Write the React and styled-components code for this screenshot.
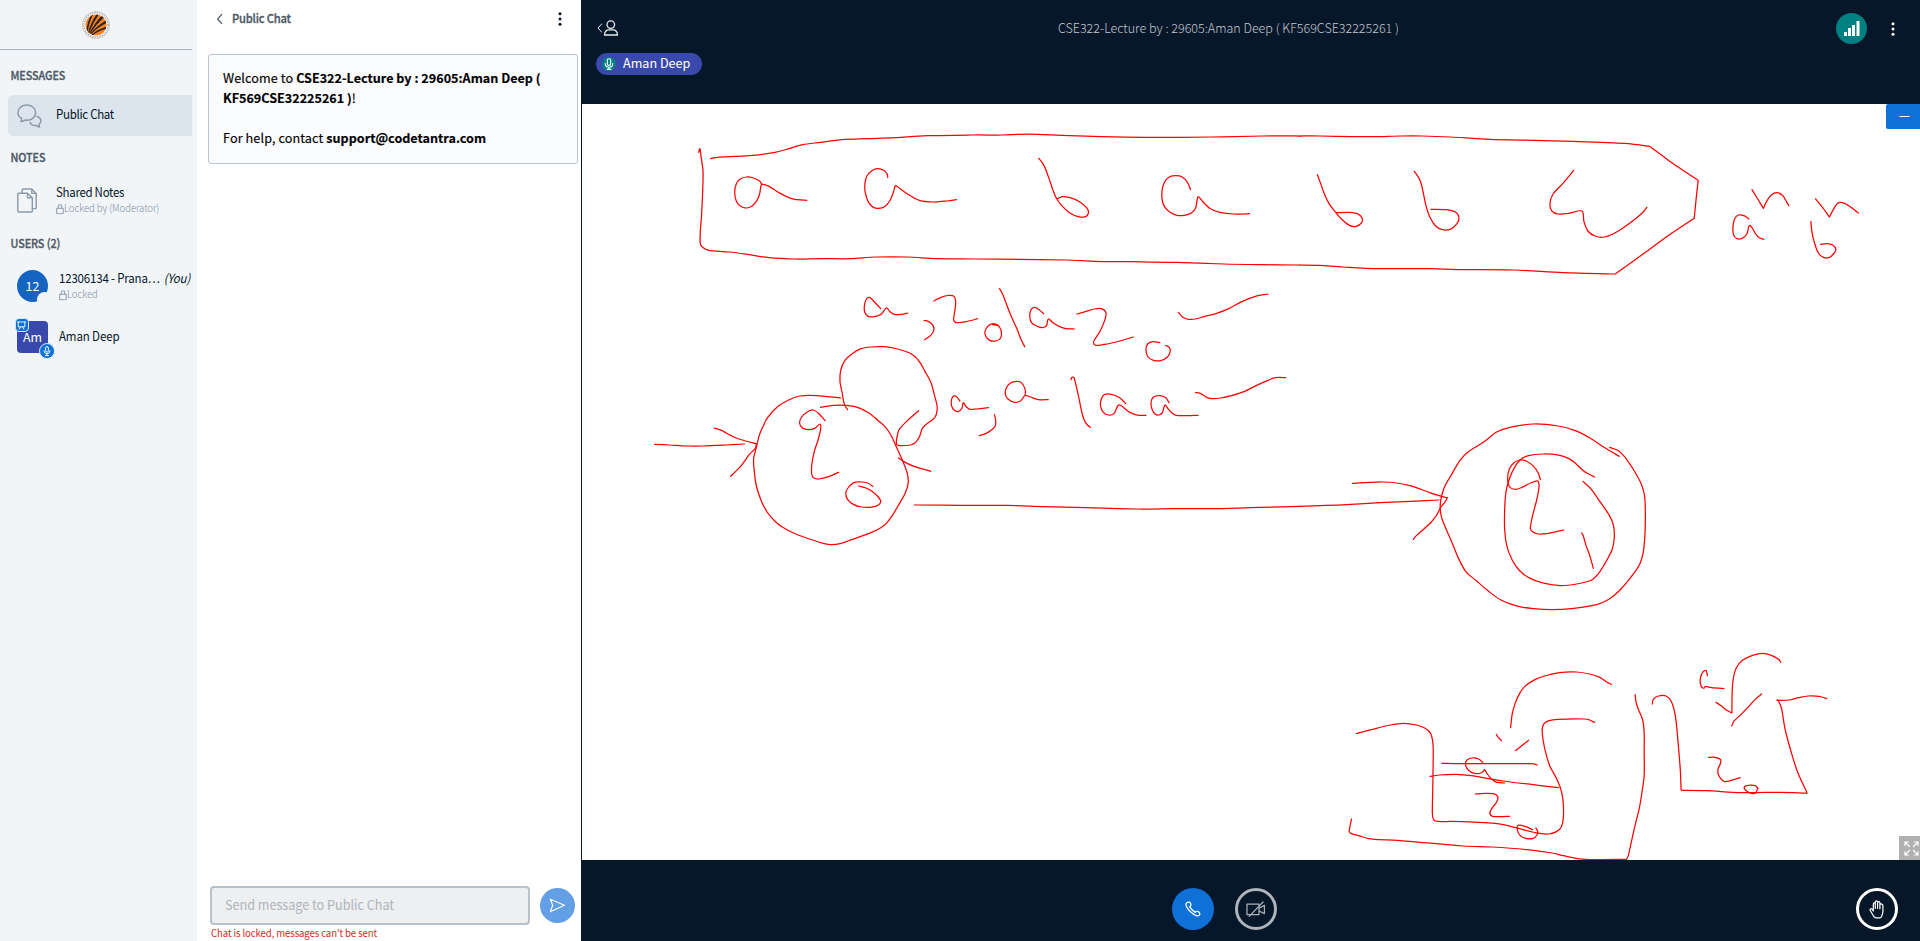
import React from "react";
import styled, { createGlobalStyle } from "styled-components";

const GlobalStyle = createGlobalStyle`
  * { box-sizing: border-box; }
  html, body { margin: 0; padding: 0; }
  body {
    width: 1920px;
    height: 941px;
    overflow: hidden;
    font-family: "Noto Sans CJK SC", "Noto Sans", sans-serif;
    color: #06172a;
  }
`;

const Page = styled.div`
  display: flex;
  width: 1920px;
  height: 941px;
  background: #06172a;
`;

/* ---------- Sidebar ---------- */

const Sidebar = styled.aside`
  width: 197px;
  height: 941px;
  background: #f1f5f8;
  padding-right: 5px;
  display: flex;
  flex-direction: column;
`;

const Brand = styled.div`
  height: 50px;
  border-bottom: 1px solid #a7b3bd;
  display: flex;
  align-items: center;
  justify-content: center;
`;

const SectionTitle = styled.h2`
  margin: ${(p) => p.$top}px 0 0 10.5px;
  height: 20px;
  font-size: 10.8px;
  line-height: 18px;
  font-weight: 500;
  color: #4e5a66;
  -webkit-text-stroke: 0.3px #4e5a66;
  letter-spacing: -0.1px;
  white-space: nowrap;
  transform: scaleY(1.08);
`;

const NavItem = styled.div`
  display: flex;
  align-items: center;
  margin: ${(p) => p.$top}px 0 0 8px;
  height: 41px;
  padding-left: 9px;
  border-radius: 5px 0 0 5px;
  background: ${(p) => (p.$active ? "#dce4ed" : "transparent")};
`;

const IconSlot = styled.span`
  display: flex;
  width: ${(p) => p.$width}px;
  flex: none;
`;

const TextColumn = styled.div`
  display: flex;
  flex-direction: column;
  min-width: 0;
  padding-bottom: ${(p) => p.$lift || 0}px;
`;

const ItemName = styled.div`
  font-size: 11.5px;
  line-height: 18px;
  white-space: nowrap;
  letter-spacing: ${(p) => p.$spacing || 0}px;
  padding-bottom: ${(p) => p.$lift || 0}px;
  transform: scaleY(1.09);
`;

const You = styled.em`
  margin-left: 4px;
`;

const ItemNote = styled.div`
  display: flex;
  align-items: center;
  font-size: 9.6px;
  line-height: 15px;
  font-weight: 300;
  color: #84919e;
  white-space: nowrap;
  letter-spacing: -0.08px;
  transform: scaleY(1.08);
`;

const UserRow = styled.div`
  display: flex;
  align-items: center;
  height: 40px;
  margin: ${(p) => p.$top}px 0 0 17px;
`;

const Avatar = styled.div`
  position: relative;
  display: flex;
  flex: none;
  align-items: center;
  justify-content: center;
  width: 31px;
  height: 32px;
  margin-right: 11px;
  border-radius: ${(p) => (p.$round ? "50%" : "4px")};
  background: ${(p) => p.$color};
  color: #fff;
  font-size: 12.4px;
  line-height: 20px;
`;

const Notch = styled.span`
  position: absolute;
  right: -4px;
  bottom: -5px;
  width: 15px;
  height: 15px;
  border-radius: 50%;
  background: #f1f5f8;
`;

const Badge = styled.span`
  position: absolute;
  left: ${(p) => p.$left}px;
  top: ${(p) => p.$top}px;
  width: ${(p) => p.$size}px;
  height: ${(p) => p.$size}px;
  display: flex;
  align-items: center;
  justify-content: center;
  border: 1px solid #d5e6f8;
  border-radius: ${(p) => (p.$square ? "4px" : "50%")};
  background: #0f70d7;
`;

/* ---------- Chat ---------- */

const ChatPanel = styled.section`
  width: 384px;
  height: 941px;
  background: #fff;
  display: flex;
  flex-direction: column;
  padding-left: 11px;
`;

const ChatHeader = styled.header`
  display: flex;
  align-items: center;
  height: 38px;
  padding: 0 19px 0 8px;
`;

const ChatTitle = styled.div`
  flex: 1;
  padding: 0 0 2px 9px;
  font-size: 11.2px;
  line-height: 20px;
  letter-spacing: -0.2px;
  font-weight: 500;
  color: #4e5a66;
  -webkit-text-stroke: 0.3px #4e5a66;
  transform: scaleY(1.08);
`;

const Welcome = styled.div`
  margin-top: 16px;
  width: 370px;
  height: 110px;
  border: 1px solid #b9c4ce;
  border-radius: 3px;
  background: #fafbfd;
  padding: 13px 14px;
  font-size: 12.6px;
  line-height: 20px;
  letter-spacing: 0.12px;
  color: #000;
  -webkit-text-stroke: 0.15px #000;
  white-space: nowrap;

  b { letter-spacing: 0; }
`;

const Line = styled.div`
  height: 20px;
`;

const Composer = styled.div`
  margin-top: auto;
  display: flex;
  align-items: center;
  height: 39px;
  padding-left: 2px;
`;

const MessageField = styled.div`
  width: 320px;
  height: 39px;
  border: 2px solid #b8c2cc;
  border-radius: 4px;
  background: #edeff1;
  padding-left: 13px;
  font-size: 12.6px;
  line-height: 34px;
  color: #adb4bb;

  span {
    display: inline-block;
    transform: scaleY(1.08);
  }
`;

const SendButton = styled.div`
  display: flex;
  align-items: center;
  justify-content: center;
  width: 35px;
  height: 35px;
  margin-left: 10px;
  border-radius: 50%;
  background: #629fe4;
`;

const LockedMessage = styled.div`
  height: 16px;
  padding-left: 3px;
  font-size: 9.6px;
  line-height: 16px;
  letter-spacing: -0.1px;
  color: #df2721;
  transform: scaleY(1.08);
`;

/* ---------- Meeting ---------- */

const Meeting = styled.main`
  flex: 1;
  display: flex;
  flex-direction: column;
  padding-left: 1px;
  background: #06172a;
`;

const TopBar = styled.header`
  display: grid;
  grid-template-columns: 120px 1fr 179px;
  align-items: center;
  height: 53px;
  padding-left: 14px;
`;

const MeetingTitle = styled.div`
  padding-top: 2px;
  text-align: center;
  font-size: 12.5px;
  line-height: 20px;
  font-weight: 300;
  color: #c3c8ce;
  white-space: nowrap;
`;

const TopActions = styled.div`
  display: flex;
  align-items: center;
  justify-content: flex-end;
  gap: 23.5px;
  padding: 4px 25.5px 0 0;
`;

const SignalButton = styled.div`
  display: flex;
  align-items: center;
  justify-content: center;
  width: 31px;
  height: 31px;
  border-radius: 50%;
  background: #008081;
`;

const TalkingRow = styled.div`
  height: 51px;
  padding-left: 14px;
`;

const TalkingPill = styled.div`
  display: flex;
  align-items: center;
  width: 106px;
  height: 22px;
  padding-left: 6px;
  border-radius: 11px;
  background: #3949ab;
  color: #fff;
`;

const TalkerName = styled.span`
  padding-bottom: 2px;
  font-size: 12.6px;
  line-height: 18px;
  white-space: nowrap;
`;

const MicDot = styled.span`
  display: flex;
  align-items: center;
  justify-content: center;
  width: 14px;
  height: 14px;
  margin-right: 7px;
  border-radius: 50%;
  background: #008081;
`;

const Whiteboard = styled.div`
  position: relative;
  height: 756px;
  background: #fff;
`;

const Canvas = styled.svg`
  display: block;
  fill: none;
  stroke: #ff0000;
  stroke-width: 1.25;
  stroke-linecap: round;
  stroke-linejoin: round;

  path { vector-effect: non-scaling-stroke; }
`;

const MinimizeButton = styled.div`
  position: absolute;
  top: 0;
  right: 0;
  display: flex;
  align-items: center;
  justify-content: center;
  width: 34px;
  height: 25px;
  padding-left: 3px;
  border-radius: 2px 0 0 2px;
  background: #0f70d7;
`;

const FullscreenButton = styled.div`
  position: absolute;
  right: 0;
  bottom: 0;
  display: flex;
  align-items: center;
  justify-content: center;
  width: 21px;
  height: 24px;
  padding-left: 3px;
  background: #b1b1b1;
`;

const ActionBar = styled.footer`
  display: grid;
  grid-template-columns: 1fr auto 1fr;
  align-items: center;
  height: 81px;
  padding: 17px 22px 0 0;
`;

const MediaControls = styled.div`
  grid-column: 2;
  display: flex;
  gap: 21px;
  margin-right: 31px;
`;

const RoundButton = styled.div`
  display: flex;
  flex: none;
  align-items: center;
  justify-content: center;
  width: 42px;
  height: 42px;
  border-radius: 50%;
  border: ${(p) => (p.$ring ? `3px solid ${p.$ring}` : "none")};
  background: ${(p) => p.$fill || "transparent"};
  justify-self: end;
`;

/* ---------- Icons ---------- */

const Icon = ({ w, h, color, width = 1.2, children, box }) => (
  <svg
    width={w}
    height={h}
    viewBox={box || `0 0 ${w} ${h}`}
    fill="none"
    stroke={color}
    strokeWidth={width}
    strokeLinecap="round"
    strokeLinejoin="round"
  >
    {children}
  </svg>
);

const Logo = () => (
  <svg width="28" height="28" viewBox="0 0 28 28">
    <defs>
      <clipPath id="ball"><circle cx="14" cy="14" r="10.5" /></clipPath>
    </defs>
    <circle cx="14" cy="14" r="13.6" fill="#f6f4f2" stroke="#b5b1af" strokeWidth="0.6" />
    <circle cx="14" cy="14" r="12.1" fill="none" stroke="#a39d9a" strokeWidth="1.4" strokeDasharray="1.1 1.3" />
    <circle cx="14" cy="14" r="10.5" fill="#f58220" />
    <g fill="#2b2320" clipPath="url(#ball)">
      <path d="M4.6 20Q5 11 9.6 3.6L11.4 3Q7 11 5.8 21Z" />
      <path d="M6 21.5Q9 11 14.8 3L17.2 3Q11 11.5 6.8 22.4Z" />
      <path d="M7 22.6Q13 11.5 20 4.6L22 6.2Q14.4 13 7.8 23Z" />
      <path d="M8 23Q15 14.4 24 9.4L25 11.8Q16 16 8.8 23.6Z" />
      <path d="M9.4 23.6Q16 18 25 15.4L25 17.8Q17 19.4 10.6 24.2Z" />
    </g>
  </svg>
);

const ChatIcon = () => (
  <Icon w={25} h={24} color="#8b9aa8" width={1.5}>
    <path d="M3.9 17.4C4.5 16.6 4.8 15.6 4.6 14.5C2.3 13.1 .9 11 .9 8.7C.9 4.4 4.8 1 9.8 1S18.7 4.4 18.7 8.7S14.8 16.2 9.8 16.2C9.2 16.2 8.7 16.2 8.1 16.1C7 17 5.6 17.5 3.9 17.4Z" />
    <path d="M20 12.5C22.4 13.2 23.8 14.9 23.8 16.9C23.8 18.5 23 19.8 21.7 20.7C21.7 21.5 22.1 22.2 22.6 23C21.3 22.9 20.2 22.3 19.4 21.5C16.3 21.8 13.9 20.5 13.2 18.5" />
  </Icon>
);

const NotesIcon = () => (
  <Icon w={20} h={25} color="#8b9aa8" width={1.4}>
    <path d="M10.5 5.2H1.5Q.8 5.2 .8 6V23.3Q.8 24 1.5 24H14.5Q15.3 24 15.3 23.3V9.8L10.5 5.2V9.8H15.3" />
    <path d="M5.2 4.8V1.8Q5.2 1 6 1H14.8L19.2 5.4V19.8Q19.2 20.6 18.4 20.6H15.5M14.8 1V5.4H19.2" />
  </Icon>
);

const LockIcon = () => (
  <Icon w={8} h={10} color="#8b9aa8" width={1}>
    <rect x=".7" y="4.3" width="6.5" height="5" rx=".5" />
    <path d="M2.2 4.2V2.8Q2.2 1 4 1T5.8 2.8V4.2" />
  </Icon>
);

const MicIcon = ({ size = 10 }) => (
  <Icon w={size} h={size} color="#fff" width={0.9} box="0 0 10 10">
    <rect x="3.6" y=".6" width="2.8" height="5.6" rx="1.4" />
    <path d="M1.9 4.6Q1.9 7.8 5 7.8T8.1 4.6M5 7.8V9.5M3.4 9.5H6.6" />
  </Icon>
);

const PresenterIcon = () => (
  <Icon w={9} h={9} color="#fff" width={0.9}>
    <path d="M.5 1H8.5M1.2 1V5.8H7.8V1M3.4 5.8L2.2 8.2M5.6 5.8L6.8 8.2" />
  </Icon>
);

const Dots = ({ color }) => (
  <svg width="4" height="14" viewBox="0 0 4 14" fill={color}>
    <circle cx="2" cy="1.8" r="1.5" />
    <circle cx="2" cy="7" r="1.5" />
    <circle cx="2" cy="12.2" r="1.5" />
  </svg>
);

const UserToggleIcon = () => (
  <Icon w={24} h={20} color="#e6e9ec" width={1.3}>
    <path d="M5.6 7L2 11L5.6 15" strokeWidth="1" />
    <circle cx="14.8" cy="7.6" r="3.8" />
    <path d="M8.5 18Q8.7 12.8 13 12.8H16.8Q21.3 12.8 21.5 18Z" />
  </Icon>
);

const HandIcon = () => (
  <Icon w={16} h={19} color="#fff" width={1.2}>
    <path d="M4.3 11V3.9Q4.3 2.8 5.3 2.8T6.3 3.9V8.4V2Q6.4 .8 7.5 .8T8.6 2V8.3V2.8Q8.8 1.6 9.8 1.7T10.9 2.9V8.8V4.8Q11.2 3.8 12.1 3.9T13.9 5.2V12.2L12.7 16.4Q12.2 17.9 10.8 17.9H7.1Q5.7 17.9 4.9 16.7L1.3 10.5Q.6 9.4 1.5 8.9T3.3 9.3L4.3 11" />
  </Icon>
);

/* ---------- Handwritten strokes ---------- */

// Joins the sampled pen points with smooth cubic segments.
// A "|" between points lifts the smoothing, leaving a sharp corner.
function toPath(stroke) {
  return stroke
    .split("|")
    .map((part, index) => {
      const p = part.trim().split(/\s+/).map((s) => s.split(",").map(Number));
      let d = `${index ? "L" : "M"}${p[0]}`;
      for (let i = 0; i < p.length - 1; i += 1) {
        const a = p[i - 1] || p[i];
        const b = p[i];
        const c = p[i + 1];
        const e = p[i + 2] || c;
        const k = 6.5;
        d += `C${b[0] + (c[0] - a[0]) / k},${b[1] + (c[1] - a[1]) / k} ${c[0] - (e[0] - b[0]) / k},${c[1] - (e[1] - b[1]) / k} ${c}`;
      }
      return d;
    })
    .join("");
}

const drawing = [
  {
    name: "tape left",
    origin: [690, 120],
    scale: [620 / 1568, 1 / 3],
    strokes: [
      "22,97 25,86 28,110 33,156 32,215 29,290 26,335 26,370 32,382 48,391 100,396 150,404 200,413 265,417 330,416 405,416 470,411 550,411 625,416 720,417 830,418 950,420 1025,424 1120,425 1230,427 1350,432 1450,434 1543,435",
      "52,116 70,112 150,107 215,97 250,86 285,74 330,67 385,59 450,56 520,53 600,47 710,45 790,45 830,43 880,43 940,46 1040,50 1150,52 1320,51 1450,48 1543,48",
      "180,190 176,183 160,174 143,171 127,177 117,192 113,216 117,243 128,259 143,264 157,258 169,242 176,222 180,195 184,193 200,199 225,218 250,233 265,238 295,241",
      "500,172 499,163 490,151 475,146 460,152 447,169 442,196 444,222 452,248 464,262 477,265 492,260 505,243 514,218 519,198 526,201 550,222 580,241 617,246 650,243 674,239",
      "882,115 894,134 904,162 915,200 925,231 938,254 960,278 982,290 1000,290 1008,278 1003,263 985,245 961,233 942,230 930,236",
      "1266,209 1258,187 1245,171 1229,167 1212,171 1200,187 1194,210 1194,239 1200,260 1213,276 1232,286 1250,286 1268,279 1279,263 1284,232 1290,235 1300,249 1316,266 1340,277 1375,282 1415,281",
    ],
  },
  {
    name: "tape right",
    origin: [1300, 120],
    scale: [620 / 1568, 1 / 3],
    strokes: [
      "0,48 50,48 130,50 190,50 255,48 310,48 380,51 480,58 590,61 690,64 820,70 884,79|884,79 915,106 945,132 975,156 1007,181|1007,181 1002,235 997,295|997,295 930,348 870,400 797,462|797,462 665,458 540,450 400,449 330,446 200,446 110,441 50,436 0,435",
      "44,164 52,190 62,223 72,248 88,274 105,297 125,316 142,319 156,308 157,293 145,281 127,277 92,278",
      "289,154 304,182 312,220 319,259 328,290 343,318 360,329 380,328 397,311 402,292 394,277 370,269 331,268",
      "692,151 665,190 640,222 632,252 637,273 653,282 680,280 713,273 718,304 728,333 746,348 770,351 805,333 860,285 877,262",
      "1143,209 1172,265|1172,265 1180,244 1192,225 1207,218 1221,227 1236,257",
      "1135,297 1123,287 1109,285 1099,297 1095,320 1096,344 1105,356 1118,355 1130,342 1136,317 1143,323 1153,343 1163,354 1173,358",
      "1304,237 1320,260 1339,291|1339,291 1349,268 1360,250 1372,248 1390,259 1412,279",
      "1292,304 1295,338 1302,372 1311,399 1324,412 1339,412 1351,399 1355,387 1347,375 1333,371 1317,373",
    ],
  },
  {
    name: "start state",
    origin: [640, 280],
    scale: [660 / 1568, 1 / 3],
    strokes: [
      "572,86 557,66 546,53 538,57 533,78 534,97 542,109 557,110 573,103 585,84 594,95 604,103 621,103 636,99",
      "675,122 685,124 696,136 698,151 690,167 676,179",
      "698,63 715,52 733,46 746,49 750,67 748,92 745,119 752,128 775,125 802,116",
      "852,136 840,131 829,136 820,152 821,168 831,181 845,183 857,174 858,152 851,137 838,134",
      "854,26 862,44 880,103 895,145 905,178 914,200",
      "959,101 949,90 938,82 929,89 926,110 931,129 944,139 956,143 966,136 970,117 982,129 997,140 1012,146 1032,147",
      "1038,102 1058,95 1080,87 1096,86 1107,98 1104,121 1092,156 1078,184 1083,196 1110,192 1140,183 1172,171",
      "1235,188 1219,185 1206,192 1202,209 1207,231 1220,241 1237,242 1253,231 1260,213 1257,202 1249,196",
      "1279,97 1290,112 1303,118 1320,117 1342,109 1370,100 1400,85 1430,65 1462,49 1492,42",
      "493,389 485,371 480,336 475,304 477,270 487,241 504,221 525,206 548,201 580,200 612,207 641,219 655,232 667,251 677,274 691,307 699,343 706,380 704,403 697,417 678,435 670,447 664,470 654,488 643,495 613,496 609,486 612,463 617,446 636,421 662,392",
      "477,354 440,349 405,346 380,348 353,360 326,381 303,413 292,440 283,467 277,500 270,535 271,568 276,615 287,659 302,696 320,723 337,740 370,762 410,780 435,790 455,794 478,790 505,778 550,757 572,743 585,730 598,709 613,678 630,640 637,610 635,580 623,540 607,495 596,465 582,440 566,422 544,399 517,382 490,376 460,376 429,382",
      "440,422 425,401 412,390 398,395 384,411 379,429 386,444 400,449 415,445 428,432 429,449 423,480 414,515 408,555 408,583 413,594 425,597 448,590 472,577",
      "553,619 541,609 525,606 508,608 494,624 489,640 493,658 508,674 526,681 546,682 564,677 572,665 566,651 551,634 537,624 520,618",
      "35,493 70,495 110,498 150,498 205,495 248,492",
      "176,444 195,452 215,466 235,477 276,491|276,491 274,505 260,523 239,559 215,589",
      "614,534 630,547 653,560 691,574",
      "652,675 760,676 870,676 960,680 1060,683 1180,687 1270,686 1360,686 1450,683 1568,679",
      "760,363 752,350 744,349 740,360 740,377 747,391 757,394 765,384 768,368 775,380 784,388 800,387 828,383",
      "842,404 845,420 844,438 834,451 821,461 806,467",
      "915,346 915,328 906,308 895,304 880,309 870,325 868,343 875,358 890,367 904,363 912,350 916,346 928,351 947,359 970,359",
      "1024,299 1026,292 1031,293 1035,311 1042,350 1049,393 1055,419 1063,435 1070,442",
      "1154,371 1138,352 1120,343 1103,344 1096,357 1094,378 1101,397 1113,405 1126,401 1136,376 1145,379 1158,392 1170,401 1185,406 1202,406",
      "1257,368 1249,353 1235,347 1220,351 1214,368 1217,390 1224,402 1233,405 1241,398 1247,375 1255,387 1265,400 1279,407 1326,406",
      "1320,338 1331,340 1348,353 1360,356 1380,354 1405,347 1435,335 1465,316 1492,301 1510,293 1534,293",
    ],
  },
  {
    name: "final state",
    origin: [1320, 400],
    scale: [1 / 3, 1 / 3],
    strokes: [
      "-62,319 0,317 80,314 180,308 270,304 356,300",
      "97,250 150,247 190,246 230,249 270,257 325,276 358,287 380,293|382,293 375,306 362,322 350,345 334,366 307,391 289,407 280,418",
      "898,169 857,145 810,114 766,92 715,78 640,72 570,82 530,96 490,127 445,155 420,181 392,228 372,264 361,310 364,350 380,391 399,435 414,472 437,514 470,543 505,573 543,600 595,619 640,626 695,629 755,626 830,614 868,597 897,573 930,535 958,495 970,455 975,400 976,340 974,290 965,255 943,213 913,169 893,151 869,142",
      "824,231 792,214 768,191 747,176 720,166 670,162 625,167 600,180 582,205 567,240 558,275 554,330 554,390 561,440 577,481 597,510 625,532 665,548 720,557 770,552 815,540 838,517 859,483 877,447 883,410 880,375 868,346 842,308 814,268 789,244",
      "661,239 655,220 641,199 618,183 600,180 582,188 568,207 563,236 569,261 586,268 604,263 632,249 653,243 657,260 650,300 637,350 631,385 639,396 656,402 686,400 731,390",
      "785,399 790,408 798,436 810,469 820,505",
    ],
  },
  {
    name: "stacks",
    origin: [1330, 630],
    scale: [590 / 1568, 1 / 3],
    strokes: [
      "70,311 110,299 160,285 195,280 230,285 253,295 268,312 274,347 274,410 273,480 272,550 275,568 287,574 350,575 445,581 490,592 545,608 580,612 602,605 615,590 620,565 620,520 615,484 604,450 584,407 573,367 566,327 564,297 569,281 582,272 605,268 675,267 690,270 703,277",
      "480,293 484,254 492,220 504,190 518,169 541,151 570,138 610,128 655,126 690,132 717,142 735,156 748,163",
      "442,313 447,322 456,332",
      "493,362 512,345 528,331",
      "297,400 350,401 430,401 530,401 551,405",
      "266,439 290,435 335,433 375,437 460,453 540,464 607,473",
      "406,398 395,387 378,384 365,389 360,400 364,415 376,427 394,431 406,426 411,419 418,432 430,448 443,457 464,459",
      "386,492 410,490 434,491 446,500 443,516 432,532 425,548 432,559 450,560 477,559",
      "538,599 520,590 500,586 498,600 505,616 520,625 540,625 550,615 552,604 547,594",
      "57,567 54,585 51,604 57,611 77,617 103,626 130,629 180,631 240,637 355,648 430,651 525,659 590,669 620,677 680,688 788,688|788,688 793,676 800,640 812,580 822,535 830,480 835,435 835,360 835,310 831,270 819,237 813,214 811,194",
      "857,222 858,211 865,202 878,197 893,198 905,210 914,237 920,275 926,350 931,420 933,478|935,481 1000,482 1090,488 1160,487 1230,488 1266,490|1266,490 1266,484 1245,433 1230,383 1210,300 1200,235 1190,209|1188,211 1220,210 1245,203 1270,198 1300,199 1320,206",
      "1198,97 1192,88 1173,76 1150,70 1123,76 1096,91 1080,113 1072,144 1069,180 1068,249|1068,249 1053,240 1038,226 1026,217",
      "1068,288 1073,274 1090,256 1110,233 1130,208 1147,192",
      "1003,137 1000,122 992,125 985,141 984,158 989,173 995,174 998,169 1015,173 1047,176",
      "1006,382 1023,382 1038,389 1037,402 1031,418 1033,436 1047,454 1067,451 1090,443",
      "1138,476 1130,467 1112,466 1101,471 1106,482 1120,490 1132,488 1136,476",
    ],
  },
];

const Drawing = () => (
  <Canvas width="1338" height="756" viewBox="582 104 1338 756">
    {drawing.map((group) => (
      <g key={group.name} transform={`translate(${group.origin}) scale(${group.scale})`}>
        {group.strokes.map((stroke) => (
          <path key={stroke} d={toPath(stroke)} />
        ))}
      </g>
    ))}
  </Canvas>
);

export default function App() {
  return (
    <>
      <GlobalStyle />
      <Page>
        <Sidebar>
          <Brand><Logo /></Brand>
          <SectionTitle $top={16}>MESSAGES</SectionTitle>
          <NavItem $top={9} $active>
            <IconSlot $width={39}><ChatIcon /></IconSlot>
            <ItemName $spacing={-0.3} $lift={3}>Public Chat</ItemName>
          </NavItem>
          <SectionTitle $top={12}>NOTES</SectionTitle>
          <NavItem $top={12}>
            <IconSlot $width={39}><NotesIcon /></IconSlot>
            <TextColumn $lift={2}>
              <ItemName $spacing={-0.3}>Shared Notes</ItemName>
              <ItemNote><LockIcon />Locked by (Moderator)</ItemNote>
            </TextColumn>
          </NavItem>
          <SectionTitle $top={13}>USERS (2)</SectionTitle>
          <UserRow $top={12}>
            <Avatar $round $color="#1565c0">12<Notch /></Avatar>
            <TextColumn $lift={1}>
              <ItemName $spacing={-0.18}>12306134 - Prana…<You>(You)</You></ItemName>
              <ItemNote><LockIcon />Locked</ItemNote>
            </TextColumn>
          </UserRow>
          <UserRow $top={11}>
            <Avatar $color="#3949ab">
              Am
              <Badge $left={-2.5} $top={-3} $size={14} $square><PresenterIcon /></Badge>
              <Badge $left={21.5} $top={22} $size={16}><MicIcon /></Badge>
            </Avatar>
            <ItemName $spacing={-0.12} $lift={3}>Aman Deep</ItemName>
          </UserRow>
        </Sidebar>

        <ChatPanel>
          <ChatHeader>
            <Icon w={7} h={12} color="#4e5a66" width={1.2}><path d="M5.8 1.4L1.6 6L5.8 10.6" /></Icon>
            <ChatTitle>Public Chat</ChatTitle>
            <Dots color="#06172a" />
          </ChatHeader>
          <Welcome>
            <Line>Welcome to <b>CSE322-Lecture by : 29605:Aman Deep (</b></Line>
            <Line><b>KF569CSE32225261 )</b>!</Line>
            <Line />
            <Line>For help, contact <b>support@codetantra.com</b></Line>
          </Welcome>
          <Composer>
            <MessageField><span>Send message to Public Chat</span></MessageField>
            <SendButton>
              <Icon w={17} h={15} color="#fff" width={1.1}>
                <path d="M1.3 1.3L15.5 7.3L1.3 13.7L3.7 7.3Z" />
              </Icon>
            </SendButton>
          </Composer>
          <LockedMessage>Chat is locked, messages can't be sent</LockedMessage>
        </ChatPanel>

        <Meeting>
          <TopBar>
            <UserToggleIcon />
            <MeetingTitle>CSE322-Lecture by : 29605:Aman Deep ( KF569CSE32225261 )</MeetingTitle>
            <TopActions>
              <SignalButton>
                <svg width="16" height="15" viewBox="0 0 16 15" fill="#fff">
                  <rect x="0" y="11" width="3" height="4" />
                  <rect x="4" y="7" width="3" height="8" />
                  <rect x="8" y="4" width="3" height="11" />
                  <rect x="12.5" y="0" width="3" height="15" />
                </svg>
              </SignalButton>
              <Dots color="#fff" />
            </TopActions>
          </TopBar>
          <TalkingRow>
            <TalkingPill>
              <MicDot><MicIcon size={12} /></MicDot>
              <TalkerName>Aman Deep</TalkerName>
            </TalkingPill>
          </TalkingRow>
          <Whiteboard>
            <Drawing />
            <MinimizeButton>
              <Icon w={11} h={4} color="#fff" width={1.2}><path d="M1 1.5H10" /></Icon>
            </MinimizeButton>
            <FullscreenButton>
              <Icon w={15} h={15} color="#fff" width={1.2}>
                <path d="M1 4.5V1H4.5M1 1L5.5 5.5M10.5 1H14V4.5M14 1L9.5 5.5M1 10.5V14H4.5M1 14L5.5 9.5M14 10.5V14H10.5M14 14L9.5 9.5" />
              </Icon>
            </FullscreenButton>
          </Whiteboard>
          <ActionBar>
            <MediaControls>
              <RoundButton $fill="#0f70d7">
                <Icon w={16} h={16} color="#fff" width={1.3}>
                  <path d="M1.2 2.4Q2.5 .6 4.3 1.2Q5.9 2 5.9 4Q5.6 5.3 4.7 5.9Q6.8 9.2 10.1 11.4Q11 10 12.9 10.4Q15 11.2 14.8 13.2Q14 15.2 11.8 14.8Q4.5 12 1.3 5Q.8 3.4 1.2 2.4Z" />
                </Icon>
              </RoundButton>
              <RoundButton $ring="#aeb2b9">
                <Icon w={20} h={16} color="#aeb2b9" width={1.2}>
                  <rect x="1" y="3.2" width="12" height="10.5" />
                  <path d="M13.2 7.2L18.4 4.4V12.6L13.2 10M3.2 15.3L17 1" />
                </Icon>
              </RoundButton>
            </MediaControls>
            <RoundButton $ring="#fff"><HandIcon /></RoundButton>
          </ActionBar>
        </Meeting>
      </Page>
    </>
  );
}
